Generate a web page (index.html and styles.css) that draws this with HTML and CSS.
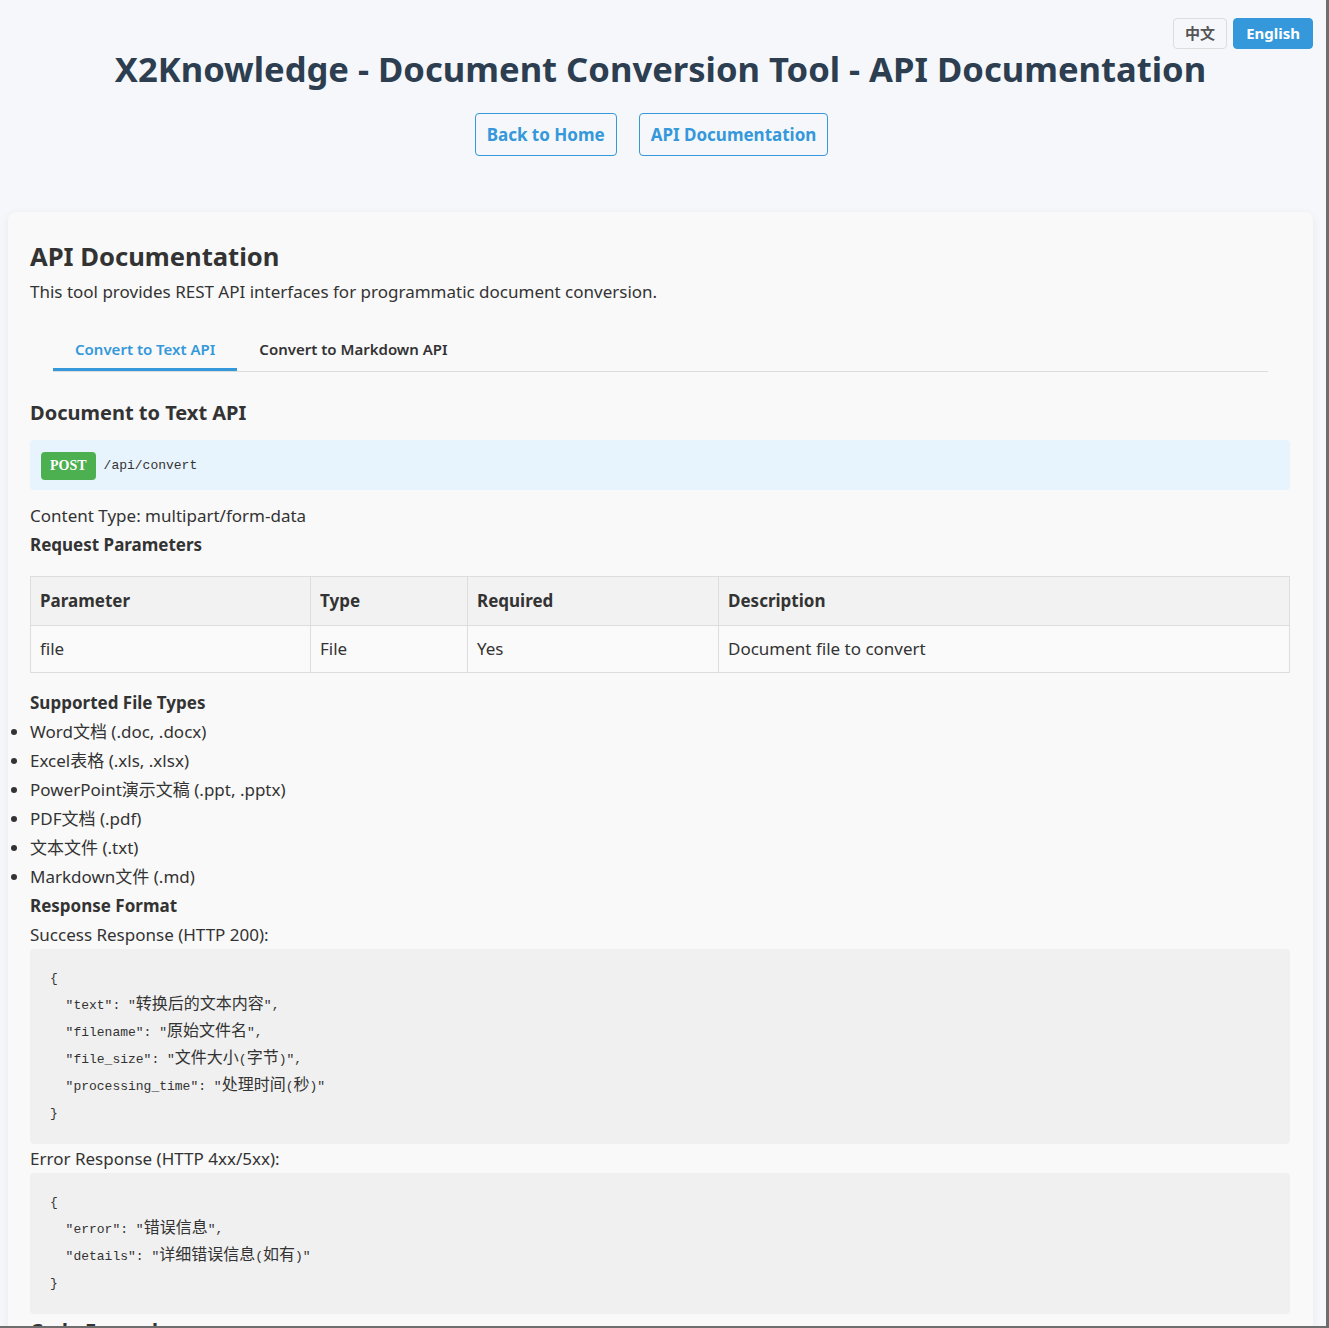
FILE: index.html
```html
<!DOCTYPE html>
<html lang="en">
<head>
<meta charset="utf-8">
<title>X2Knowledge - API Documentation</title>
<link rel="stylesheet" href="styles.css">
</head>
<body>
<div class="page">
  <header class="header">
    <div class="lang-switch">
      <button class="lang-btn">中文</button>
      <button class="lang-btn active">English</button>
    </div>
    <h1 class="title">X2Knowledge - Document Conversion Tool - API Documentation</h1>
    <nav class="nav">
      <a class="nav-btn" href="#">Back to Home</a>
      <a class="nav-btn" href="#">API Documentation</a>
    </nav>
  </header>

  <main class="card">
    <h2 class="card-title">API Documentation</h2>
    <p class="intro">This tool provides REST API interfaces for programmatic document conversion.</p>

    <div class="tabs">
      <div class="tab active">Convert to Text API</div>
      <div class="tab">Convert to Markdown API</div>
    </div>

    <h3 class="section-title">Document to Text API</h3>
    <div class="endpoint">
      <span class="method">POST</span>
      <span class="path">/api/convert</span>
    </div>

    <p class="line">Content Type: multipart/form-data</p>
    <p class="line strong">Request Parameters</p>

    <table class="params">
      <colgroup>
        <col class="c1"><col class="c2"><col class="c3"><col>
      </colgroup>
      <thead>
        <tr><th>Parameter</th><th>Type</th><th>Required</th><th>Description</th></tr>
      </thead>
      <tbody>
        <tr><td>file</td><td>File</td><td>Yes</td><td>Document file to convert</td></tr>
      </tbody>
    </table>

    <p class="line strong">Supported File Types</p>
    <ul class="types">
      <li>Word文档 (.doc, .docx)</li>
      <li>Excel表格 (.xls, .xlsx)</li>
      <li>PowerPoint演示文稿 (.ppt, .pptx)</li>
      <li>PDF文档 (.pdf)</li>
      <li>文本文件 (.txt)</li>
      <li>Markdown文件 (.md)</li>
    </ul>

    <p class="line strong">Response Format</p>
    <p class="line">Success Response (HTTP 200):</p>
    <pre class="code"><span class="ln">{</span><span class="ln">  "text": "<span class="zh">转换后的文本内容</span>",</span><span class="ln">  "filename": "<span class="zh">原始文件名</span>",</span><span class="ln">  "file_size": "<span class="zh">文件大小</span>(<span class="zh">字节</span>)",</span><span class="ln">  "processing_time": "<span class="zh">处理时间</span>(<span class="zh">秒</span>)"</span><span class="ln">}</span></pre>
    <p class="line">Error Response (HTTP 4xx/5xx):</p>
    <pre class="code"><span class="ln">{</span><span class="ln">  "error": "<span class="zh">错误信息</span>",</span><span class="ln">  "details": "<span class="zh">详细错误信息</span>(<span class="zh">如有</span>)"</span><span class="ln">}</span></pre>
    <h3 class="section-title next">Code Examples</h3>
  </main>
</div>
<div class="frame"></div>
</body>
</html>
```

FILE: styles.css
```css
html, body {
  margin: 0;
  padding: 0;
}
body {
  background: #f5f7fa;
  font-family: "Noto Sans", "Open Sans", "Noto Sans CJK SC", sans-serif;
  color: #333;
  font-size: 17px;
  line-height: 29px;
}
.page {
  padding: 0 16px 0 8px;
}
.header {
  position: relative;
  text-align: center;
  padding-top: 46px;
  padding-bottom: 56px;
}
.lang-switch {
  position: absolute;
  top: 18px;
  right: 0;
  display: flex;
  gap: 6px;
}
.lang-btn {
  font-family: "Noto Sans", "Noto Sans CJK SC", sans-serif;
  font-size: 15px;
  font-weight: 700;
  line-height: 21px;
  padding: 4px 11px;
  border: 1px solid #ddd;
  border-radius: 4px;
  background: #f5f7fa;
  color: #555;
}
.lang-btn.active {
  background: #3498db;
  border-color: #3498db;
  color: #fff;
  padding: 4px 12px;
}
.title {
  margin: 0;
  font-size: 34.6px;
  line-height: 46px;
  font-weight: 700;
  color: #2c3e50;
}
.nav {
  display: flex;
  justify-content: center;
  gap: 22px;
  margin-top: 21px;
  padding-right: 18px;
}
.nav-btn {
  display: inline-block;
  padding: 8px 11px;
  border: 1px solid #3498db;
  border-radius: 4px;
  color: #3498db;
  font-weight: 700;
  font-size: 17px;
  line-height: 25px;
  text-decoration: none;
}
.card {
  background: #f9f9f9;
  border-radius: 8px;
  box-shadow: 0 2px 10px rgba(0, 0, 0, 0.06);
  padding: 22px 23px 20px 22px;
}
.card-title {
  margin: 6px 0 0;
  font-size: 25.6px;
  line-height: 34px;
  color: #333;
}
.intro {
  margin: 3px 0 0;
}
.tabs {
  display: flex;
  margin: 21px 22px 0 23px;
  border-bottom: 1px solid #ddd;
}
.tab {
  padding: 12px 22px 9px;
  font-size: 15px;
  line-height: 20px;
  font-weight: 600;
  color: #333;
  border-bottom: 3px solid transparent;
}
.tab.active {
  color: #3498db;
  border-bottom-color: #3498db;
}
.section-title {
  margin: 26px 0 12px;
  font-size: 20px;
  line-height: 30px;
  color: #333;
}
.section-title.next {
  margin: 2px 0 0;
}
.endpoint {
  display: flex;
  align-items: center;
  gap: 8px;
  background: #e8f4fd;
  border-radius: 4px;
  padding: 11px 11px 10px;
  margin-bottom: 11px;
}
.method {
  background: #4caf50;
  color: #fff;
  font-family: "Liberation Serif", serif;
  font-weight: 700;
  font-size: 14px;
  line-height: 28px;
  padding: 0 9px;
  border-radius: 4px;
}
.path {
  font-family: "Liberation Mono", "Noto Sans CJK SC", monospace;
  font-size: 13px;
}
.line {
  margin: 0;
}
.strong {
  font-weight: 700;
}
.params {
  width: 100%;
  table-layout: fixed;
  border-collapse: collapse;
  margin: 17px 0 15px;
}
.params th, .params td {
  border: 1px solid #ddd;
  text-align: left;
  font-size: 17px;
  line-height: 28px;
}
.params th {
  padding: 10px 9px;
  background: #f2f2f2;
  font-weight: 700;
}
.params td {
  padding: 9px 9px;
  background: #fafafa;
}
.c1 { width: 280px; }
.c2 { width: 157px; }
.c3 { width: 251px; }
.types {
  margin: 0;
  padding-left: 0;
  list-style: disc outside;
}
.code {
  margin: 0;
  background: #f0f0f0;
  border-radius: 4px;
  padding: 16px 20px 17px;
  font-family: "Liberation Mono", "Noto Sans CJK SC", monospace;
  font-size: 13px;
  line-height: 27px;
  color: #333;
}
.code .ln {
  display: block;
  height: 27px;
}
.code .zh {
  font-size: 16px;
  line-height: 20px;
}
.frame {
  position: fixed;
  inset: 0;
  border-right: 3px solid #6e6e6e;
  border-bottom: 2px solid #6e6e6e;
  pointer-events: none;
}
```
